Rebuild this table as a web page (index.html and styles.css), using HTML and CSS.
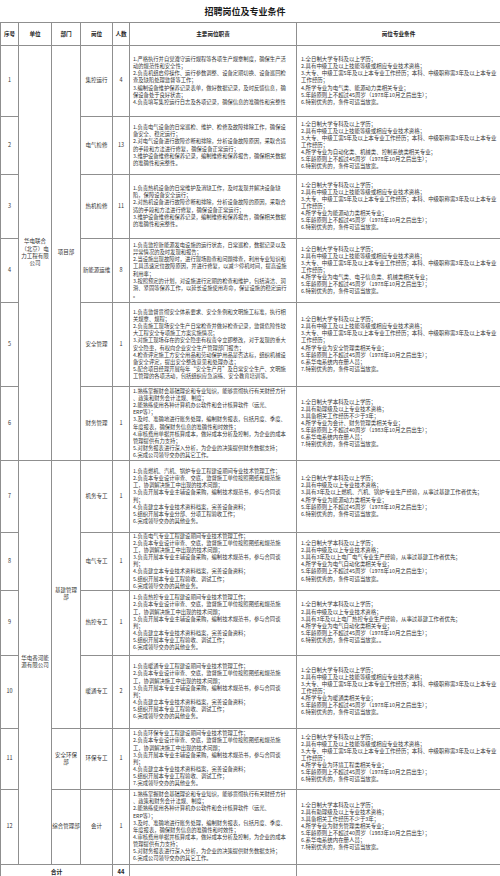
FILE: index.html
```html
<!DOCTYPE html>
<html lang="zh">
<head>
<meta charset="utf-8">
<title>招聘岗位及专业条件</title>
<link rel="stylesheet" href="styles.css">
</head>
<body>
<div class="page">
  <h1 class="title">招聘岗位及专业条件</h1>
  <table class="grid">
    <colgroup>
      <col class="c-no"><col class="c-unit"><col class="c-dept"><col class="c-post"><col class="c-num"><col class="c-duty"><col class="c-req">
    </colgroup>
    <thead>
      <tr class="h-head">
        <th>序号</th><th>单位</th><th>部门</th><th>岗位</th><th>人数</th><th>主要岗位职责</th><th>岗位专业条件</th>
      </tr>
    </thead>
    <tbody>
      <tr class="h1">
        <td class="c">1</td>
        <td class="c unit" rowspan="6">华电联合<br>（北京）电<br>力工程有限<br>公司</td>
        <td class="c" rowspan="6">项目部</td>
        <td class="c">集控运行</td>
        <td class="c">4</td>
        <td class="t">1.严格执行并自觉遵守运行规程等各项生产规章制度，确保生产活<br>动的规范性和安全性；<br>2.负责机组启停操作、运行参数调整、设备定期切换、设备巡回检<br>查及缺陷处理监督等工作；<br>3.编制设备维护保养记录表单，做好数据记录，及时反馈信息，确<br>保设备处于良好状态；<br>4.负责填写集控运行日志及各项记录，确保信息的准确性和完整性</td>
        <td class="t r">1.全日制大学专科及以上学历；<br>2.具有中级工及以上技能等级或相应专业技术资格；<br>3.大专、中级工需5年及以上本专业工作经历；本科、中级职称需3年及以上本专业<br>工作经历；<br>4.所学专业为电气类、能源动力类相关专业；<br>5.年龄原则上不超过45周岁（1978年10月之后出生）；<br>6.特别优秀的，条件可适当放宽。</td>
      </tr>
      <tr class="h2">
        <td class="c">2</td>
        <td class="c">电气检修</td>
        <td class="c">13</td>
        <td class="t">1.负责电气设备的日常巡检、维护、检修及故障排除工作，确保设<br>备安全、稳定运行；<br>2.对电气设备进行故障诊断和排除，分析设备故障原因，采取合适<br>的手段和方法进行修复，确保设备正常运行；<br>3.维护设备维修和保养记录，编制维修和保养报告，确保相关数据<br>的准确性和完整性。</td>
        <td class="t r">1.全日制大学专科及以上学历；<br>2.具有中级工及以上技能等级或相应专业技术资格；<br>3.大专、中级工需5年及以上本专业工作经历；本科、中级职称需3年及以上本专业<br>工作经历；<br>4.所学专业为自动化类、机械类、控制系统类相关专业；<br>5.年龄原则上不超过45周岁（1978年10月之后出生）；<br>6.特别优秀的，条件可适当放宽。</td>
      </tr>
      <tr class="h3">
        <td class="c">3</td>
        <td class="c">热机检修</td>
        <td class="c">11</td>
        <td class="t">1.负责热机设备的日常维护及消缺工作，及时发现并解决设备缺<br>陷，保障设备安全运行；<br>2.对热机设备进行故障诊断和排除，分析设备故障的原因，采取合<br>适的手段和方法进行修复，确保设备正常运行；<br>3.维护设备维修和保养记录，编制维修和保养报告，确保相关数据<br>的准确性和完整性。</td>
        <td class="t r">1.全日制大学专科及以上学历；<br>2.具有中级工及以上技能等级或相应专业技术资格；<br>3.大专、中级工需5年及以上本专业工作经历；本科、中级职称需3年及以上本专业<br>工作经历；<br>4.所学专业为能源动力类相关专业；<br>5.年龄原则上不超过45周岁（1978年10月之后出生）；<br>6.特别优秀的，条件可适当放宽。</td>
      </tr>
      <tr class="h4">
        <td class="c">4</td>
        <td class="c">新能源运维</td>
        <td class="c">8</td>
        <td class="t">1.负责监控新能源发电设施的运行状态，日常巡检，数据记录以及<br>异常情况的及时发现和报告；<br>2.当设施出现故障时，进行现场勘查和问题排查，利用专业知识和<br>工具迅速定位故障原因，并进行修复，以减少停机时间，提高设施<br>利用率；<br>3.按照预定的计划，对设施进行定期的检查和维护，包括清洁、润<br>滑、紧固等保养工作，以延长设施使用寿命，保证设施的稳定运行<br>。</td>
        <td class="t r">1.全日制大学专科及以上学历；<br>2.具有中级工及以上技能等级或相应专业技术资格；<br>3.大专、中级工需5年及以上本专业工作经历；本科、中级职称需3年及以上本专业<br>工作经历；<br>4.所学专业为电气类、电子信息类、机械类相关专业；<br>5.年龄原则上不超过45周岁（1978年10月之后出生）；<br>6.特别优秀的，条件可适当放宽。</td>
      </tr>
      <tr class="h5">
        <td class="c">5</td>
        <td class="c">安全管理</td>
        <td class="c">1</td>
        <td class="t">1.负责监督贯彻安全体系要求、安全条例和文明施工标准，执行相<br>关规章、规程；<br>2.负责施工现场安全生产日常检查并做好检查记录，监督危险性较<br>大工程安全专项施工方案实施情况；<br>3.对施工现场存在的安全隐患有权责令立即整改，对于发现的重大<br>安全隐患，有权向企业安全生产管理部门报告；<br>4.检查评定施工方安全用品和劳动保护用品是否达标，组织机械设<br>备安全评定，提出安全整改意见和处理办法；<br>5.配合项目经理开展每年“安全生产月”及日常安全生产、文明施<br>工管理的各项活动，包括组织应急演练、安全教育培训等。</td>
        <td class="t r">1.全日制大学专科及以上学历；<br>2.具有中级工及以上技能等级或相应专业技术资格；<br>3.大专、中级工需5年及以上本专业工作经历；本科、中级职称需3年及以上本专业<br>工作经历；<br>4.所学专业为安全管理类相关专业；<br>5.年龄原则上不超过45周岁（1978年10月之后出生）；<br>6.系华电系统内在册人员；<br>7.特别优秀的，条件可适当放宽。</td>
      </tr>
      <tr class="h6">
        <td class="c">6</td>
        <td class="c">财务管理</td>
        <td class="c">1</td>
        <td class="t">1.熟练掌握财会基础理论和专业知识，能够贯彻执行有关财经方针<br>、政策和财务会计法规、制度；<br>2.能熟练使用各种计算机办公软件和会计核算软件（远光、<br>ERP等）；<br>3.及时、准确地进行账务处理，编制财务报表，包括月度、季度、<br>年度报表，确保财务信息的准确性和时效性；<br>4.审核费用单据并核算成本，做好成本分析及控制，为企业的成本<br>管理提供有力支持；<br>5.对财务报表进行深入分析，为企业的决策提供财务数据支持；<br>6.完成公司领导交办的其它工作。</td>
        <td class="t r">1.全日制大学本科及以上学历；<br>2.具有助理级及以上专业技术资格；<br>3.具备相关工作经历不少于3年；<br>4.所学专业为会计、财务管理类相关专业；<br>5.年龄原则上不超过40周岁（1983年10月之后出生）；<br>6.系华电系统内在册人员；<br>7.特别优秀的，条件可适当放宽。</td>
      </tr>
      <tr class="h7">
        <td class="c">7</td>
        <td class="c unit" rowspan="6">华电香河能<br>源有限公司</td>
        <td class="c" rowspan="4">基建管理<br>部</td>
        <td class="c">机务专工</td>
        <td class="c">1</td>
        <td class="t">1.负责燃机、汽机、锅炉专业工程建设期间专业技术管理工作；<br>2.负责本专业设计审查、交底，监督施工单位按照图纸和规范施<br>工，协调解决施工中出现的技术问题；<br>3.负责开展本专业主辅设备采购，编制技术规范书，参与合同谈<br>判；<br>4.负责建立本专业技术资料档案，完善设备资料；<br>5.组织开展本专业分部、分项工程验收工作；<br>6.完成领导交办的其他业务。</td>
        <td class="t r">1.全日制大学本科及以上学历；<br>2.具有中级及以上专业技术资格；<br>3.具有3年及以上燃机、汽机、锅炉专业生产经验，从事过基建工作者优先；<br>4.所学专业为能源动力类相关专业；<br>5.年龄原则上不超过45周岁（1978年10月之后出生）；<br>6.特别优秀的，条件可适当放宽。</td>
      </tr>
      <tr class="h8">
        <td class="c">8</td>
        <td class="c">电气专工</td>
        <td class="c">1</td>
        <td class="t">1.负责电气专业工程建设期间专业技术管理工作；<br>2.负责本专业设计审查、交底，监督施工单位按照图纸和规范施<br>工，协调解决施工中出现的技术问题；<br>3.负责开展本专业主辅设备采购，编制技术规范书，参与合同谈<br>判；<br>4.负责建立本专业技术资料档案，完善设备资料；<br>5.组织开展本专业工程验收、调试工作；<br>6.完成领导交办的其他业务。</td>
        <td class="t r">1.全日制大学本科及以上学历；<br>2.具有中级及以上专业技术资格；<br>3.具有3年及以上电厂电气专业生产经验，从事过基建工作者优先；<br>4.所学专业为电气自动化类相关专业；<br>5.年龄原则上不超过45周岁（1978年10月之后出生）；<br>6.特别优秀的，条件可适当放宽。</td>
      </tr>
      <tr class="h9">
        <td class="c">9</td>
        <td class="c">热控专工</td>
        <td class="c">1</td>
        <td class="t">1.负责热控专业工程建设期间专业技术管理工作；<br>2.负责本专业设计审查、交底，监督施工单位按照图纸和规范施<br>工，协调解决施工中出现的技术问题；<br>3.负责开展本专业主辅设备采购，编制技术规范书，参与合同谈<br>判；<br>4.负责建立本专业技术资料档案，完善设备资料；<br>5.组织开展本专业工程验收、调试工作；<br>6.完成领导交办的其他业务。</td>
        <td class="t r">1.全日制大学本科及以上学历；<br>2.具有中级及以上专业技术资格；<br>3.具有3年及以上电厂热控专业生产经验，从事过基建工作者优先；<br>4.所学专业为电气自动化类相关专业；<br>5.年龄原则上不超过45周岁（1978年10月之后出生）；<br>6.特别优秀的，条件可适当放宽。。</td>
      </tr>
      <tr class="h10">
        <td class="c">10</td>
        <td class="c">暖通专工</td>
        <td class="c">2</td>
        <td class="t">1.负责暖通专业工程建设期间专业技术管理工作；<br>2.负责本专业设计审查、交底，监督施工单位按照图纸和规范施<br>工，协调解决施工中出现的技术问题；<br>3.负责开展本专业主辅设备采购，编制技术规范书，参与合同谈<br>判；<br>4.负责建立本专业技术资料档案，完善设备资料；<br>5.组织开展本专业工程验收、调试工作；<br>6.完成领导交办的其他业务。</td>
        <td class="t r">1.全日制大学专科及以上学历；<br>2.具有中级工及以上技能等级或相应专业技术资格；<br>3.大专、中级工需5年及以上本专业工作经历；本科、中级职称需3年及以上本专业<br>工作经历；<br>4.所学专业为暖通类相关专业；<br>5.年龄原则上不超过45周岁（1978年10月之后出生）；<br>6.特别优秀的，条件可适当放宽。</td>
      </tr>
      <tr class="h11">
        <td class="c">11</td>
        <td class="c">安全环保<br>部</td>
        <td class="c">环保专工</td>
        <td class="c">1</td>
        <td class="t">1.负责环保专业工程建设期间专业技术管理工作；<br>2.负责本专业设计审查、交底，监督施工单位按照图纸和规范施<br>工，协调解决施工中出现的技术问题；<br>3.负责开展本专业主辅设备采购，编制技术规范书，参与合同谈<br>判；<br>4.负责建立本专业技术资料档案，完善设备资料；<br>5.组织开展本专业工程验收、调试工作；<br>7.完成领导交办的其他业务。</td>
        <td class="t r">1.全日制大学专科及以上学历；<br>2.具有中级工及以上技能等级或相应专业技术资格；<br>3.大专、中级工需5年及以上本专业工作经历；本科、中级职称需3年及以上本专业<br>工作经历；<br>4.所学专业为环境工程类相关专业；<br>5.年龄原则上不超过45周岁（1978年10月之后出生）；<br>6.特别优秀的，条件可适当放宽。</td>
      </tr>
      <tr class="h12">
        <td class="c">12</td>
        <td class="c">综合管理部</td>
        <td class="c">会计</td>
        <td class="c">1</td>
        <td class="t">1.熟练掌握财会基础理论和专业知识，能够贯彻执行有关财经方针<br>、政策和财务会计法规、制度；<br>2.能熟练使用各种计算机办公软件和会计核算软件（远光、<br>ERP等）；<br>3.及时、准确地进行账务处理，编制财务报表，包括月度、季度、<br>年度报表，确保财务信息的准确性和时效性；<br>4.审核费用单据并核算成本，做好成本分析及控制，为企业的成本<br>管理提供有力支持；<br>5.对财务报表进行深入分析，为企业的决策提供财务数据支持；<br>6.完成公司领导交办的其它工作。</td>
        <td class="t r">1.全日制大学本科及以上学历；<br>2.具有助理级及以上专业技术资格；<br>3.具备相关工作经历不少于3年；<br>4.所学专业为财务管理类相关专业；<br>5.年龄原则上不超过40周岁（1983年10月之后出生）；<br>6.系华电系统内在册人员；<br>7.特别优秀的，条件可适当放宽。</td>
      </tr>
      <tr class="h-total">
        <td class="c b" colspan="4">合计</td>
        <td class="c b">44</td>
        <td></td>
        <td></td>
      </tr>
    </tbody>
  </table>
</div>
</body>
</html>
```
FILE: styles.css
```css
html, body {
  margin: 0;
  padding: 0;
  background: #ffffff;
}
.page {
  width: 500px;
  height: 876px;
  overflow: hidden;
  font-family: "Noto Sans CJK SC", "Liberation Serif", serif;
  color: #333333;
}
.title {
  margin: 0;
  height: 22px;
  line-height: 24px;
  font-size: 9px;
  font-weight: 700;
  text-align: center;
  padding-right: 10px;
  color: #1a1a1a;
}
.grid {
  width: 500px;
  table-layout: fixed;
  border-collapse: collapse;
}
.c-no { width: 18px; }
.c-unit { width: 33px; }
.c-dept { width: 29px; }
.c-post { width: 32px; }
.c-num { width: 17px; }
.c-duty { width: 167px; }
.c-req { width: 204px; }
.grid th, .grid td {
  border: 1px solid #8f8f8f;
  padding: 0;
  vertical-align: middle;
  overflow: hidden;
}
.grid th {
  font-size: 5.6px;
  font-weight: 700;
  line-height: 7px;
  text-align: center;
  color: #222;
}
.grid td {
  font-size: 5.3px;
  line-height: 7.1px;
}
.grid td.c {
  text-align: center;
  font-size: 5.5px;
}
.grid td.unit {
  line-height: 7.4px;
}
.grid td.t {
  text-align: left;
  white-space: nowrap;
  padding-left: 3px;
}
.grid td.r {
  font-size: 5.45px;
  padding-left: 4px;
}
.grid td.b {
  font-weight: 700;
  font-size: 5.8px;
  color: #222;
}
.h-head { height: 23px; }
.h1 { height: 71px; }
.h2 { height: 58px; }
.h3 { height: 64px; }
.h4 { height: 64px; }
.h5 { height: 84px; }
.h6 { height: 74px; }
.h7 { height: 72px; }
.h8 { height: 56px; }
.h9 { height: 65px; }
.h10 { height: 73px; }
.h11 { height: 61px; }
.h12 { height: 75px; }
.h-total { height: 14px; }
```
